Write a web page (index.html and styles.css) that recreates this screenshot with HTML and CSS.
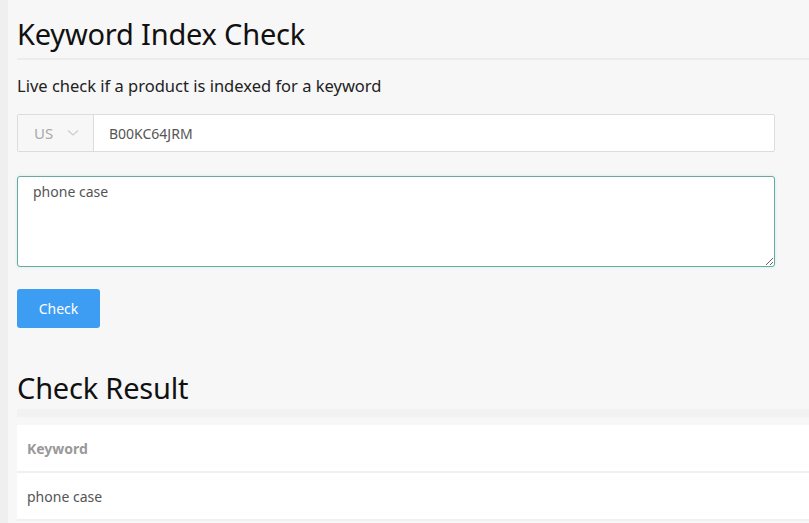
FILE: index.html
```html
<!DOCTYPE html>
<html lang="en">
<head>
    <meta charset="UTF-8">
    <meta name="viewport" content="width=device-width, initial-scale=1.0">
    <title>Keyword Index Check</title>
    <link rel="stylesheet" href="styles.css">
</head>
<body>
    <div class="page">
        <h1>Keyword Index Check</h1>
        <p class="lead">Live check if a product is indexed for a keyword</p>

        <form class="check-form">
            <div class="input-group">
                <div class="market">
                    <span>US</span>
                    <svg width="12" height="8" viewBox="0 0 12 8"><path d="M1 1.5 L6 6 L11 1.5" fill="none" stroke="#ccc" stroke-width="1.2"/></svg>
                </div>
                <input type="text" class="asin" value="B00KC64JRM">
            </div>

            <textarea class="keywords">phone case</textarea>

            <button type="button" class="btn">Check</button>
        </form>

        <h2>Check Result</h2>

        <table class="result">
            <thead>
                <tr><th>Keyword</th></tr>
            </thead>
            <tbody>
                <tr><td>phone case</td></tr>
            </tbody>
        </table>
    </div>
</body>
</html>
```

FILE: styles.css
```css
body {
    margin: 0;
    background-color: #efefef;
    font-family: "Noto Sans", "Open Sans", sans-serif;
    color: #222;
}
.page {
    margin-left: 8px;
    min-height: 523px;
    background-color: #f7f7f7;
    padding: 14px 0 0 9px;
    overflow: hidden;
}
h1, h2 {
    font-weight: normal;
    font-size: 29px;
    margin: 0;
    color: #111;
    letter-spacing: -0.2px;
}
h1 {
    padding-bottom: 5px;
    border-bottom: 2px solid #ececec;
}
.lead {
    font-size: 16.5px;
    margin: 14px 0 17px;
    color: #222;
}
.check-form {
    width: 758px;
}
.input-group {
    display: flex;
    height: 38px;
    border: 1px solid #dcdcdc;
    border-radius: 2px;
    box-sizing: border-box;
    background-color: #fff;
}
.market {
    width: 76px;
    box-sizing: border-box;
    display: flex;
    align-items: center;
    gap: 14px;
    padding-left: 16px;
    background-color: #f7f7f7;
    border-right: 1px solid #dcdcdc;
    color: #aaa;
    font-size: 15px;
}
.asin {
    flex: 1;
    border: none;
    outline: none;
    padding: 0 15px;
    font-family: inherit;
    font-size: 14px;
    color: #555;
    background: transparent;
}
.keywords {
    display: block;
    width: 100%;
    height: 91px;
    box-sizing: border-box;
    margin-top: 24px;
    padding: 5px 15px;
    border: 1px solid #6aa8a0;
    border-radius: 3px;
    font-family: inherit;
    font-size: 14px;
    color: #555;
    outline: none;
    box-shadow: 0 0 3px rgba(102, 220, 210, 0.35);
}
.btn {
    display: block;
    margin-top: 22px;
    width: 83px;
    height: 39px;
    border: none;
    border-radius: 3px;
    background-color: #3d9df2;
    color: #fff;
    font-family: inherit;
    font-size: 14px;
}
h2 {
    margin-top: 40px;
    padding-bottom: 2px;
    border-bottom: 8px solid #f2f2f2;
}
.result {
    margin-top: 8px;
    width: 100%;
    border-collapse: collapse;
    background-color: #fff;
    font-size: 14px;
}
.result th, .result td {
    text-align: left;
    height: 46px;
    padding: 0 10px;
    border-bottom: 2px solid #f0f0f0;
}
.result th {
    color: #999;
    font-weight: bold;
}
.result td {
    color: #555;
}
```
